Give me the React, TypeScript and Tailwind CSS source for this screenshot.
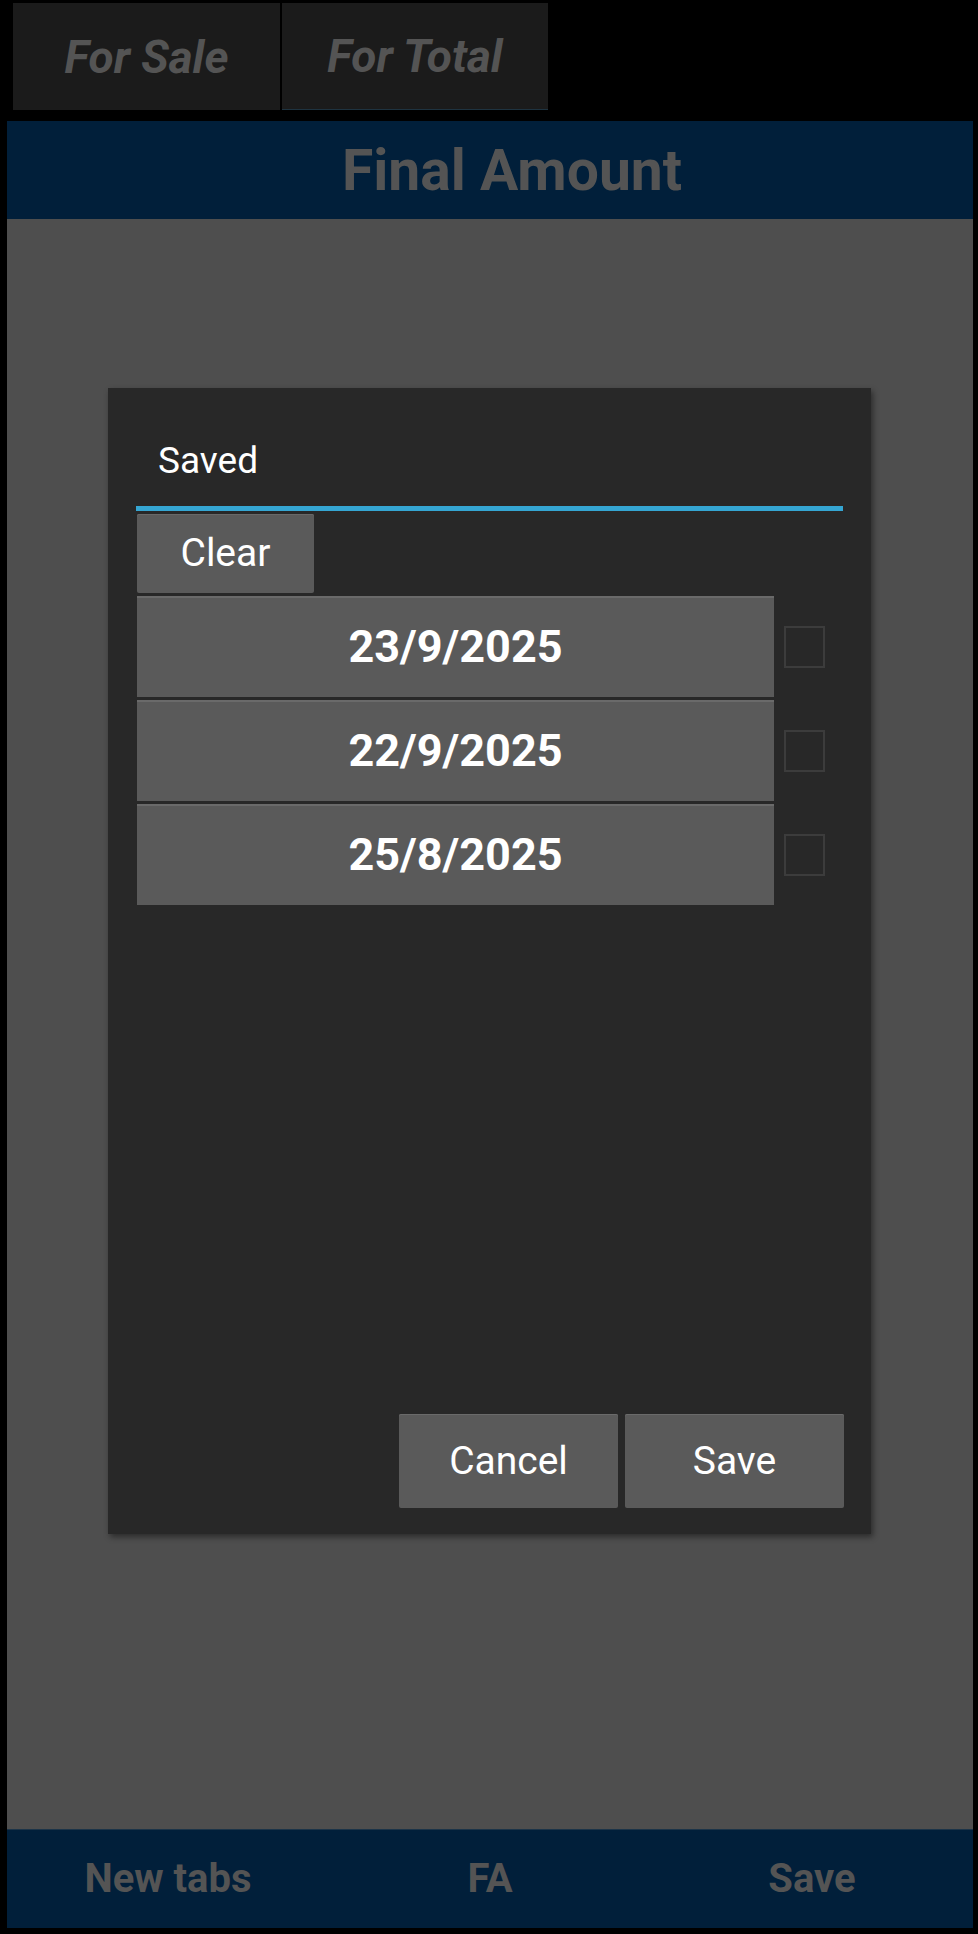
import React from "react";

const dates = ["23/9/2025", "22/9/2025", "25/8/2025"];

export default function App() {
  return (
    <div
      className="w-[978px] h-[1934px] bg-black flex flex-col overflow-hidden"
      style={{ fontFamily: "Roboto, 'Noto Sans', sans-serif" }}
    >
      {/* Top tabs */}
      <div className="flex gap-[2px] pl-[13px] pt-[3px] h-[121px]">
        <div className="w-[267px] h-[107px] bg-[#1b1b1b] flex items-center justify-center">
          <span className="text-[46px] font-bold italic text-[#545454] leading-none">For Sale</span>
        </div>
        <div className="w-[266px] h-[107px] bg-[#1b1b1b] border-b border-[#1e3340] flex items-center justify-center">
          <span className="text-[46px] font-bold italic text-[#545454] leading-none">For Total</span>
        </div>
      </div>

      {/* Header */}
      <div className="ml-[7px] w-[966px] h-[98px] bg-[#011f3a] flex items-center justify-center pl-[44px]">
        <span className="text-[57px] font-bold text-[#545454] leading-none">Final Amount</span>
      </div>

      {/* Content */}
      <div className="ml-[7px] w-[966px] h-[1610px] bg-[#4e4e4e] pt-[169px] pl-[101px]">
        <div className="w-[763px] h-[1146px] bg-[#282828] flex flex-col shadow-[2px_3px_6px_rgba(0,0,0,0.45)]">
          <div className="h-[118px] pt-[26px] pl-[50px] flex items-center">
            <span className="text-[37px] text-white leading-none">Saved</span>
          </div>
          <div className="mx-[28px] h-[5px] bg-[#35a6d3]" />
          <div className="pl-[29px] pr-[27px] pt-[3px] flex flex-col">
            <div className="w-[177px] h-[79px] bg-[#5a5a5a] rounded-[2px] shadow-[inset_0_1px_0_#686868] flex items-center justify-center">
              <span className="text-[39px] text-white leading-none">Clear</span>
            </div>
            <div className="flex flex-col gap-[3px] mt-[3px]">
              {dates.map((d) => (
                <div key={d} className="flex items-center">
                  <div className="w-[637px] h-[101px] bg-[#5a5a5a] shadow-[inset_0_2px_0_#6a6a6a] flex items-center justify-center">
                    <span className="text-[45px] font-bold text-white leading-none">{d}</span>
                  </div>
                  <div className="flex-1 pl-[10px] flex items-center">
                    <div className="w-[41px] h-[42px] border-2 border-[#3c3c3c] bg-[#282828]" />
                  </div>
                </div>
              ))}
            </div>
          </div>
          <div className="flex-1" />
          <div className="flex justify-end gap-[7px] pr-[27px] pb-[26px]">
            <div className="w-[219px] h-[94px] bg-[#5a5a5a] rounded-[2px] shadow-[inset_0_1px_0_#6a6a6a] flex items-center justify-center">
              <span className="text-[39px] text-white leading-none">Cancel</span>
            </div>
            <div className="w-[219px] h-[94px] bg-[#5a5a5a] rounded-[2px] shadow-[inset_0_1px_0_#6a6a6a] flex items-center justify-center">
              <span className="text-[39px] text-white leading-none">Save</span>
            </div>
          </div>
        </div>
      </div>

      {/* Footer */}
      <div className="ml-[7px] w-[966px] h-[99px] bg-[#011f3a] border-t border-[#1c3448] grid grid-cols-3">
        <div className="flex items-center justify-center">
          <span className="text-[40px] font-bold text-[#545454] leading-none">New tabs</span>
        </div>
        <div className="flex items-center justify-center">
          <span className="text-[40px] font-bold text-[#545454] leading-none">FA</span>
        </div>
        <div className="flex items-center justify-center">
          <span className="text-[40px] font-bold text-[#545454] leading-none">Save</span>
        </div>
      </div>
    </div>
  );
}
